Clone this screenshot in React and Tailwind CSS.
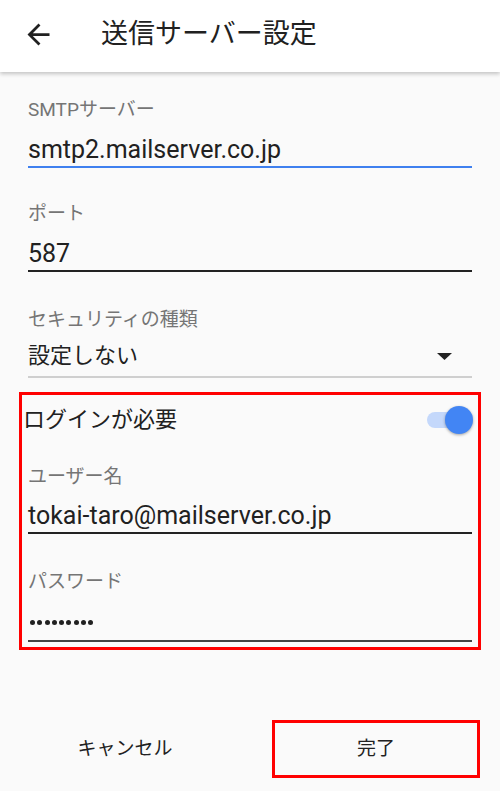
import React from "react";

const FONT = { fontFamily: 'Roboto, "Noto Sans CJK JP", sans-serif' };

function Label({ children, className = "" }) {
  return (
    <div className={"text-[19px] leading-[24px] text-[#757575] " + className}>{children}</div>
  );
}

export default function App() {
  return (
    <div className="w-[500px] h-[791px] bg-[#fafafa] overflow-hidden flex flex-col" style={FONT}>
      {/* Header */}
      <div className="h-[72px] shrink-0 bg-white shadow-[0_2px_4px_rgba(0,0,0,0.22)] flex items-center pb-[4px] relative z-10">
        <svg className="ml-[22px]" width="33" height="33" viewBox="0 0 24 24" fill="#212121">
          <path d="M20 11H7.83l5.59-5.59L12 4l-8 8 8 8 1.41-1.41L7.83 13H20v-2z" />
        </svg>
        <div className="ml-[46px] text-[27px] leading-[36px] text-[#212121]">送信サーバー設定</div>
      </div>

      {/* SMTP server */}
      <div className="px-[28px] pt-[26px]">
        <Label>SMTPサーバー</Label>
        <div className="mt-[12px] text-[25px] leading-[32px] text-[#212121] border-b-2 border-[#3f80ef]">
          smtp2.mailserver.co.jp
        </div>
      </div>

      {/* Port */}
      <div className="px-[28px] pt-[34px]">
        <Label>ポート</Label>
        <div className="mt-[12px] text-[25px] leading-[32px] text-[#212121] border-b-2 border-[#222]">
          587
        </div>
      </div>

      {/* Security */}
      <div className="px-[28px] pt-[36px]">
        <Label>セキュリティの種類</Label>
        <div className="mt-[9px] h-[37px] flex items-start justify-between border-b-2 border-[#cfcfcf]">
          <div className="text-[22px] leading-[30px] text-[#212121]">設定しない</div>
          <svg className="mr-[20px] mt-[12px]" width="15" height="7" viewBox="0 0 15 7">
            <path d="M0 0h15L7.5 7z" fill="#222" />
          </svg>
        </div>
      </div>

      {/* Login box */}
      <div className="mx-[19px] mt-[14px] border-[3px] border-[#ff0000] px-[6px] pt-[10px] pb-[5px]">
        <div className="-ml-[5px] flex items-center justify-between h-[30px]">
          <div className="text-[22px] leading-[30px] text-[#212121]">ログインが必要</div>
          <div className="relative w-[46px] h-[28px] mr-[-1px]">
            <div className="absolute left-0 right-[2px] top-[6px] h-[16px] rounded-full bg-[#c4d8fb]" />
            <div className="absolute right-0 top-0 w-[28px] h-[28px] rounded-full bg-[#4285f4] shadow-[0_1px_3px_rgba(0,0,0,0.35)]" />
          </div>
        </div>
        <Label className="mt-[30px]">ユーザー名</Label>
        <div className="mt-[11px] text-[25px] leading-[32px] text-[#212121] border-b-2 border-[#222]">
          tokai-taro@mailserver.co.jp
        </div>
        <Label className="mt-[36px]">パスワード</Label>
        <div className="mt-[10px] h-[38px] flex items-center gap-[2.3px] pl-[2px] border-b-2 border-[#444]">
          {Array.from({ length: 9 }).map((_, i) => (
            <div key={i} className="w-[5px] h-[5px] rounded-full bg-[#212121]" />
          ))}
        </div>
      </div>

      {/* Buttons */}
      <div className="mt-[70px] grid grid-cols-2">
        <div className="h-[58px] flex items-center justify-center text-[19px] text-[#212121]">キャンセル</div>
        <div className="pl-[22px] pr-[20px]">
          <div className="h-[58px] border-[3px] border-[#ff0000] flex items-center justify-center text-[19px] text-[#212121]">
            完了
          </div>
        </div>
      </div>
    </div>
  );
}
